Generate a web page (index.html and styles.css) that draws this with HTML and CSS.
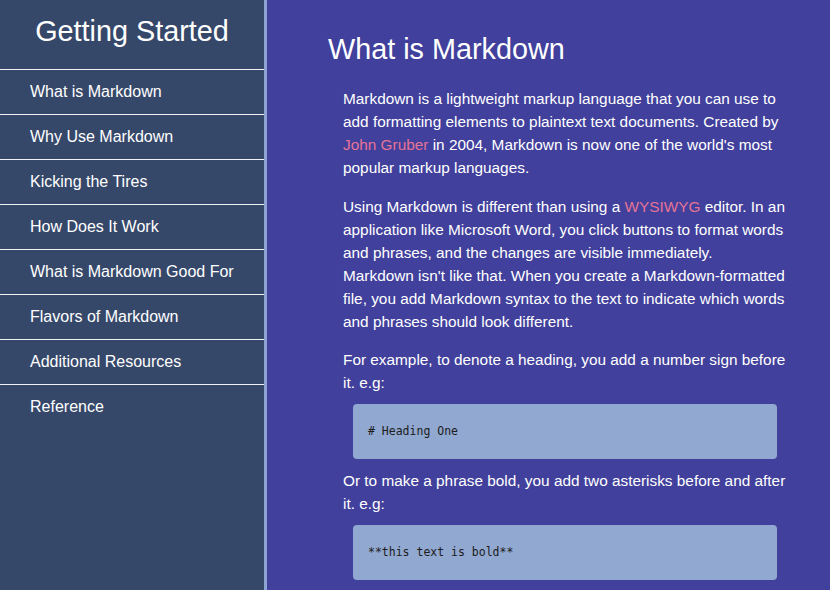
FILE: index.html
```html
<!DOCTYPE html>
<html lang="en">
<head>
<meta charset="utf-8">
<title>Markdown Documentation</title>
<link rel="stylesheet" href="styles.css">
</head>
<body>
<nav class="sidebar">
  <header class="sidebar-title">Getting Started</header>
  <ul class="nav-list">
    <li class="nav-item">What is Markdown</li>
    <li class="nav-item">Why Use Markdown</li>
    <li class="nav-item">Kicking the Tires</li>
    <li class="nav-item">How Does It Work</li>
    <li class="nav-item">What is Markdown Good For</li>
    <li class="nav-item">Flavors of Markdown</li>
    <li class="nav-item">Additional Resources</li>
    <li class="nav-item last">Reference</li>
  </ul>
</nav>
<main class="main">
  <section class="section">
    <h1 class="section-title">What is Markdown</h1>
    <p class="para">Markdown is a lightweight markup language that you can use to add formatting elements to plaintext text documents. Created by <a class="link">John Gruber</a> in 2004, Markdown is now one of the world's most popular markup languages.</p>
    <p class="para">Using Markdown is different than using a <a class="link">WYSIWYG</a> editor. In an application like Microsoft Word, you click buttons to format words and phrases, and the changes are visible immediately. Markdown isn't like that. When you create a Markdown-formatted file, you add Markdown syntax to the text to indicate which words and phrases should look different.</p>
    <p class="para">For example, to denote a heading, you add a number sign before it. e.g:</p>
    <pre class="code"><code># Heading One</code></pre>
    <p class="para">Or to make a phrase bold, you add two asterisks before and after it. e.g:</p>
    <pre class="code"><code>**this text is bold**</code></pre>
  </section>
</main>
</body>
</html>
```

FILE: styles.css
```css
html, body {
  margin: 0;
  padding: 0;
  height: 100%;
}
body {
  display: flex;
  font-family: "Liberation Sans", Arial, sans-serif;
  color: #ffffff;
  overflow: hidden;
}
.sidebar {
  width: 264px;
  flex: none;
  background: #36486a;
  border-right: 3px solid #8da4d2;
  height: 100%;
}
.sidebar-title {
  height: 54px;
  padding-top: 15px;
  text-align: center;
  font-size: 28.8px;
  line-height: 33px;
  border-bottom: 1px solid #f2f2f2;
}
.nav-list {
  list-style: none;
  margin: 0;
  padding: 0;
}
.nav-item {
  padding: 0 30px;
  height: 44px;
  line-height: 44px;
  font-size: 16px;
  border-bottom: 1px solid #f2f2f2;
}
.nav-item.last {
  border-bottom: none;
}
.main {
  flex: 1;
  background: #41409c;
  height: 100%;
  overflow: hidden;
  padding: 0 28px 0 61px;
}
.section-title {
  font-size: 28.8px;
  font-weight: normal;
  line-height: 33px;
  margin: 33px 0 21px;
}
.para {
  font-size: 15.36px;
  line-height: 23px;
  margin: 0 15px 15.5px 15px;
}
.para + .code {
  margin-top: -5.5px;
}
.code {
  margin: 0 25px 10px 25px;
  padding: 20px 15px;
  background: #91a8d0;
  border-radius: 4px;
  color: #1c1c1c;
  font-family: "DejaVu Sans Mono", "Liberation Mono", monospace;
  font-size: 11.5px;
  line-height: 15px;
}
.code + .para {
  margin-top: 0;
}
.link {
  color: #e57396;
  text-decoration: none;
}
```
